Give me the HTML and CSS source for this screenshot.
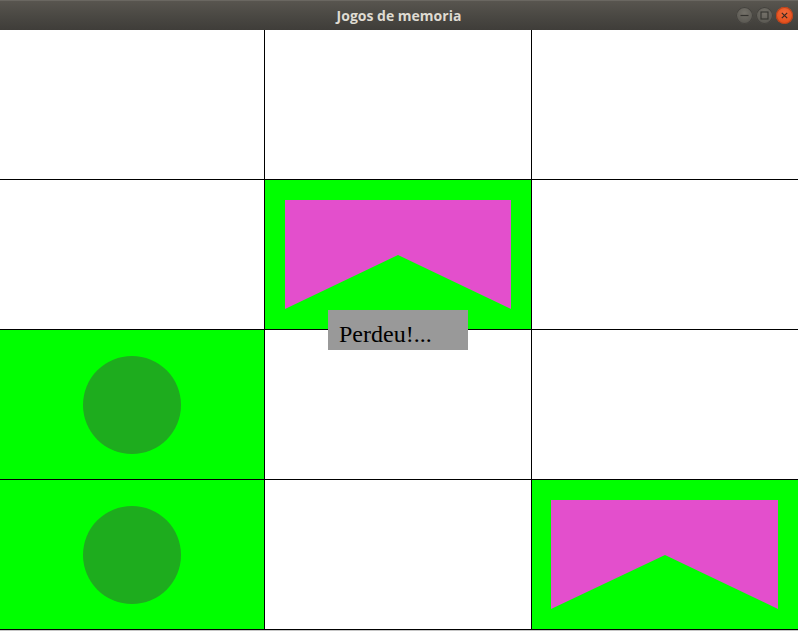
FILE: index.html
```html
<!DOCTYPE html>
<html>
<head>
<meta charset="utf-8">
<title>Jogos de memoria</title>
<link rel="stylesheet" href="styles.css">
</head>
<body>
<div class="window">
  <header class="titlebar">
    <span class="title">Jogos de memoria</span>
    <div class="controls">
      <span class="btn btn-min"><svg width="17" height="17" viewBox="0 0 17 17"><line x1="4.5" y1="8.5" x2="12.5" y2="8.5" stroke="#34332f" stroke-width="1.2"/></svg></span>
      <span class="btn btn-max"><svg width="17" height="17" viewBox="0 0 17 17"><rect x="5" y="5" width="7" height="7" fill="none" stroke="#34332f" stroke-width="1.1"/></svg></span>
      <span class="btn btn-close"><svg width="17" height="17" viewBox="0 0 17 17"><path d="M5.8 5.8 L11.2 11.2 M11.2 5.8 L5.8 11.2" stroke="#3a2a22" stroke-width="1.2"/></svg></span>
    </div>
  </header>
  <main class="board">
    <div class="cell"></div>
    <div class="cell"></div>
    <div class="cell"></div>

    <div class="cell"></div>
    <div class="cell open">
      <svg class="shape" viewBox="0 0 266 149"><polygon points="20,20 246,20 246,129 133,75 20,129" fill="#e34fcc"/></svg>
    </div>
    <div class="cell"></div>

    <div class="cell open"><div class="circle"></div></div>
    <div class="cell"></div>
    <div class="cell"></div>

    <div class="cell open"><div class="circle"></div></div>
    <div class="cell"></div>
    <div class="cell open">
      <svg class="shape" viewBox="0 0 266 149"><polygon points="19,20 246,20 246,129 133,75 19,129" fill="#e34fcc"/></svg>
    </div>

    <div class="message">Perdeu!...</div>
  </main>
</div>
</body>
</html>
```
FILE: styles.css
```css
html, body {
  margin: 0;
  padding: 0;
}
body {
  width: 798px;
  height: 631px;
  background: #c6c6c6;
  overflow: hidden;
}
.window {
  display: flex;
  flex-direction: column;
}
.titlebar {
  position: relative;
  height: 30px;
  display: flex;
  align-items: center;
  justify-content: center;
  background: linear-gradient(#5c5953 0px, #57544e 2px, #4a4843 16px, #3f3d39 30px);
  box-shadow: inset 0 1px 0 #6a6761;
}
.title {
  font-family: "Open Sans", "DejaVu Sans", sans-serif;
  font-weight: 700;
  font-size: 14px;
  color: #dfdbd2;
  letter-spacing: 0;
}
.controls {
  position: absolute;
  right: 5px;
  top: 7px;
  display: flex;
  gap: 3px;
}
.btn {
  width: 17px;
  height: 17px;
  border-radius: 50%;
  display: block;
}
.btn svg {
  display: block;
}
.btn-min, .btn-max {
  background: radial-gradient(circle at 50% 35%, #747169, #5b5953 70%, #4d4b46);
  box-shadow: inset 0 0 0 1px #44423e;
}
.btn-close {
  background: radial-gradient(circle at 50% 35%, #f26a3a, #e4501c 70%, #c9431a);
  box-shadow: inset 0 0 0 1px #b9421b;
}
.board {
  position: relative;
  display: grid;
  grid-template-columns: 264px 266px 266px;
  grid-template-rows: repeat(4, 149px);
  gap: 1px;
  background: #000;
  border-bottom: 1px solid #000;
}
.cell {
  background: #fff;
  display: flex;
  align-items: center;
  justify-content: center;
}
.cell.open {
  background: #00ff00;
}
.shape {
  width: 100%;
  height: 100%;
  display: block;
}
.circle {
  width: 98px;
  height: 98px;
  border-radius: 50%;
  background: #1eac1e;
}
.message {
  position: absolute;
  left: 328px;
  top: 280px;
  width: 140px;
  height: 40px;
  box-sizing: border-box;
  padding: 12px 0 0 11px;
  background: #999999;
  font-family: "Liberation Serif", "Times New Roman", serif;
  font-size: 24px;
  line-height: 24px;
  color: #000;
}
```
